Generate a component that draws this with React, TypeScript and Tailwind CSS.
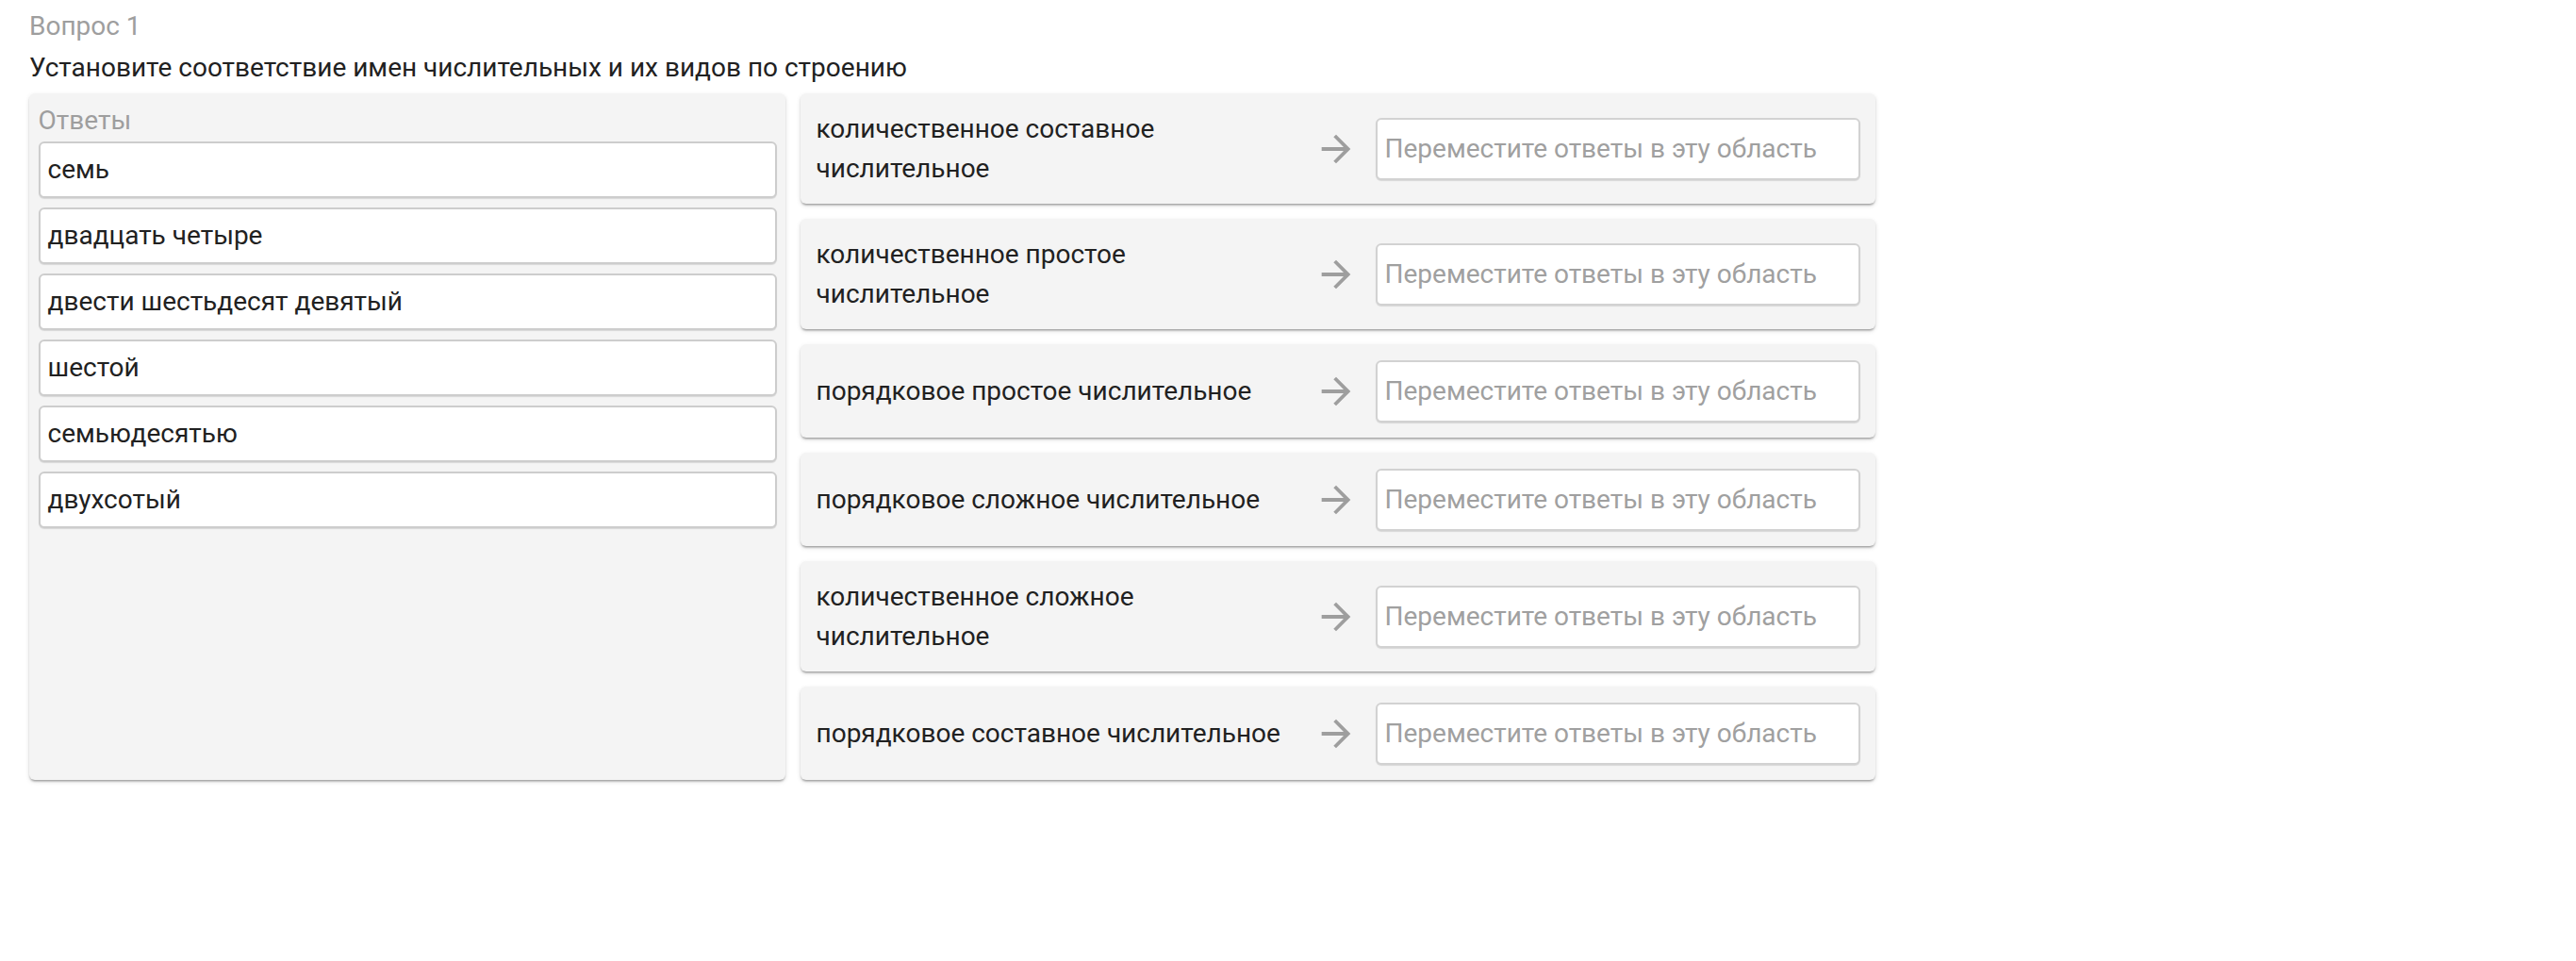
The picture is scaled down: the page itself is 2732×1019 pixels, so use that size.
const answers = ["семь", "двадцать четыре", "двести шестьдесят девятый", "шестой", "семьюдесятью", "двухсотый"]

const categories = [
  "количественное составное числительное",
  "количественное простое числительное",
  "порядковое простое числительное",
  "порядковое сложное числительное",
  "количественное сложное числительное",
  "порядковое составное числительное",
]

const paperShadow =
  "shadow-[0_3px_2px_-2px_rgba(0,0,0,0.2),0_2px_2px_0_rgba(0,0,0,0.14),0_2px_5px_0_rgba(0,0,0,0.12)]"

function ArrowIcon() {
  return (
    <svg width="46" height="46" viewBox="0 0 24 24" className="flex-shrink-0">
      <path d="M12 4l-1.41 1.41L16.17 11H4v2h12.17l-5.58 5.59L12 20l8-8z" fill="#9e9e9e" />
    </svg>
  )
}

interface MatchRowProps {
  label: string
}

function MatchRow({ label }: MatchRowProps) {
  return (
    <div className={`flex items-center rounded-[6px] bg-[#f4f4f4] px-[16.5px] py-[16.5px] ${paperShadow}`}>
      <div className="min-w-0 flex-1 pr-[14px] text-[#212121]">{label}</div>
      <ArrowIcon />
      {/* Drop zone */}
      <div className="ml-[19px] flex h-[66px] w-[514px] flex-shrink-0 items-center rounded-[6px] border-2 border-[#d2d2d2] bg-white px-[8px] text-[#a0a0a0] shadow-[0_1px_1px_rgba(0,0,0,0.12)]">
        Переместите ответы в эту область
      </div>
    </div>
  )
}

export default function App() {
  return (
    <div className="min-h-screen bg-white pl-[31px] pt-[7px] font-['Roboto',sans-serif] text-[28px] leading-[42px]">
      <div className="text-[#9e9e9e]">Вопрос 1</div>
      <div className="mt-[2px] text-[#212121]">Установите соответствие имен числительных и их видов по строению</div>

      <div className="mt-[6px] flex items-stretch gap-[16px]">
        {/* Answers pool */}
        <div className={`w-[802px] rounded-[6px] bg-[#f4f4f4] px-[9.5px] pt-[8px] ${paperShadow}`}>
          <div className="text-[#9e9e9e]">Ответы</div>
          <div className="mt-[1px] flex flex-col gap-[10px]">
            {answers.map((answer, index) => (
              <div
                key={index}
                className="flex h-[60px] items-center rounded-[6px] border-2 border-[#cdcdcd] bg-white px-[8px] text-[#212121] shadow-[0_1px_1px_rgba(0,0,0,0.12)]"
              >
                {answer}
              </div>
            ))}
          </div>
        </div>

        {/* Categories */}
        <div className="flex w-[1140px] flex-col gap-[16px]">
          {categories.map((category, index) => (
            <MatchRow key={index} label={category} />
          ))}
        </div>
      </div>
    </div>
  )
}
